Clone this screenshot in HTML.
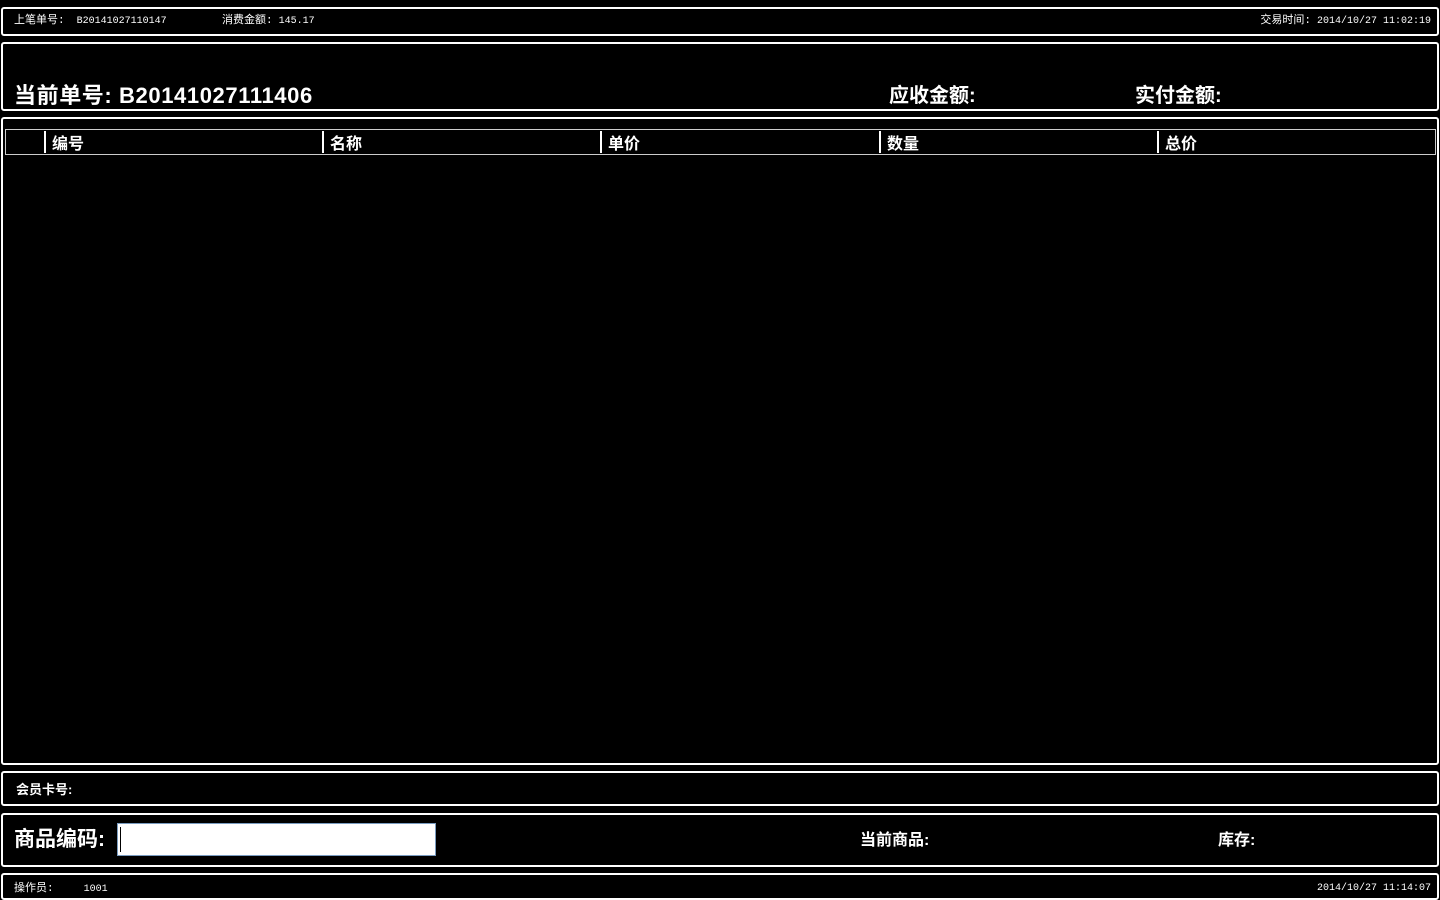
<!DOCTYPE html>
<html><head><meta charset="utf-8"><style>
html,body{margin:0;padding:0;background:#000;width:1440px;height:900px;overflow:hidden;font-family:"Liberation Sans","Noto Sans CJK SC",sans-serif;color:#fff}
.p{position:absolute;left:1px;border:2px solid #fff;border-radius:3px;box-sizing:border-box}
.t{position:absolute;white-space:nowrap}
.s{font-family:"Liberation Mono","Noto Sans CJK SC",monospace;font-size:10px;line-height:14px}
.s .c{font-size:11px;line-height:14px}
.b{font-weight:bold}
.v{position:absolute;top:131px;width:2px;height:22px;background:#fff}
</style></head><body>
<div class="p" style="top:7px;height:29px;width:1438px"></div>
<div class="p" style="top:42px;height:69px;width:1438px"></div>
<div class="p" style="top:117px;height:648px;width:1438px"></div>
<div class="p" style="top:771px;height:35px;width:1438px"></div>
<div class="p" style="top:813px;height:54px;width:1438px"></div>
<div class="p" style="top:873px;height:27px;width:1438px"></div>

<div class="t s" style="left:14px;top:14px"><span class="c">上笔单号:</span>&nbsp;&nbsp;B20141027110147</div>
<div class="t s" style="left:222px;top:14px"><span class="c">消费金额:</span>&nbsp;145.17</div>
<div class="t s" style="right:9px;top:14px"><span class="c">交易时间:</span>&nbsp;2014/10/27 11:02:19</div>

<div class="t b" style="left:14px;top:78px;font-size:22px;letter-spacing:0.6px">当前单号:&nbsp;B20141027111406</div>
<div class="t b" style="left:889px;top:79px;font-size:20px">应收金额:</div>
<div class="t b" style="left:1135px;top:79px;font-size:20px">实付金额:</div>

<div style="position:absolute;left:5px;top:129px;width:1431px;height:26px;border:1px solid #ccc;box-sizing:border-box"></div>
<div class="v" style="left:44px"></div>
<div class="v" style="left:322px"></div>
<div class="v" style="left:600px"></div>
<div class="v" style="left:879px"></div>
<div class="v" style="left:1157px"></div>
<div class="t b" style="left:52px;top:130px;font-size:16px">编号</div>
<div class="t b" style="left:330px;top:130px;font-size:16px">名称</div>
<div class="t b" style="left:608px;top:130px;font-size:16px">单价</div>
<div class="t b" style="left:887px;top:130px;font-size:16px">数量</div>
<div class="t b" style="left:1165px;top:130px;font-size:16px">总价</div>

<div class="t b" style="left:16px;top:779px;font-size:13px">会员卡号:</div>

<div class="t b" style="left:14px;top:823px;font-size:21px">商品编码:</div>
<div style="position:absolute;left:117px;top:823px;width:319px;height:33px;background:#fff;border:1px solid #7a9cc0;box-sizing:border-box"></div>
<div style="position:absolute;left:120px;top:827px;width:1px;height:25px;background:#000"></div>
<div class="t b" style="left:860px;top:826px;font-size:16px">当前商品:</div>
<div class="t b" style="left:1218px;top:826px;font-size:16px">库存:</div>

<div class="t s" style="left:14px;top:882px"><span class="c">操作员:</span>&nbsp;&nbsp;&nbsp;&nbsp;&nbsp;1001</div>
<div class="t s" style="right:9px;top:882px">2014/10/27 11:14:07</div>
</body></html>
